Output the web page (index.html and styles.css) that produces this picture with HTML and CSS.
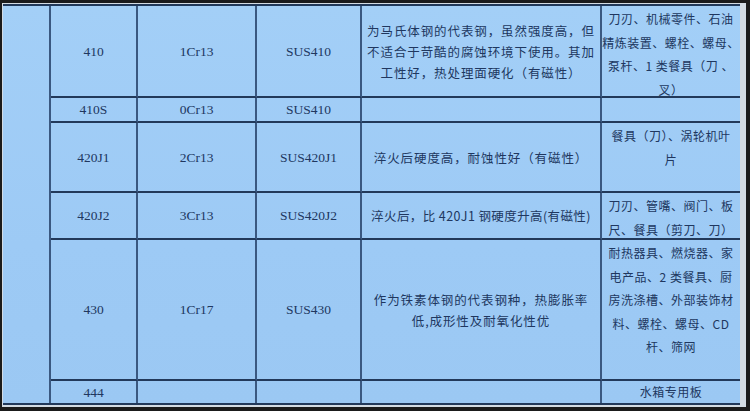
FILE: index.html
```html
<!DOCTYPE html>
<html lang="zh">
<head>
<meta charset="utf-8">
<title>不锈钢牌号对照</title>
<link rel="stylesheet" href="styles.css">
</head>
<body>
<div class="frame">
  <div class="sheet">
    <div class="c side"></div>

    <div class="c num">410</div>
    <div class="c num">1Cr13</div>
    <div class="c num">SUS410</div>
    <div class="c desc">为马氏体钢的代表钢，虽然强度高，但<br>不适合于苛酷的腐蚀环境下使用。其加<br>工性好，热处理面硬化（有磁性）</div>
    <div class="c list">刀刃、机械零件、石油<br>精炼装置、螺栓、螺母、<br>泵杆、1 类餐具（刀 、<br>叉）</div>

    <div class="c num">410S</div>
    <div class="c num">0Cr13</div>
    <div class="c num">SUS410</div>
    <div class="c desc"></div>
    <div class="c list"></div>

    <div class="c num">420J1</div>
    <div class="c num">2Cr13</div>
    <div class="c num">SUS420J1</div>
    <div class="c desc">淬火后硬度高，耐蚀性好（有磁性）</div>
    <div class="c list">餐具（刀）、涡轮机叶<br>片</div>

    <div class="c num">420J2</div>
    <div class="c num">3Cr13</div>
    <div class="c num">SUS420J2</div>
    <div class="c desc tight">淬火后，比 420J1 钢硬度升高(有磁性)</div>
    <div class="c list">刀刃、管嘴、阀门、板<br>尺、餐具（剪刀、刀）</div>

    <div class="c num">430</div>
    <div class="c num">1Cr17</div>
    <div class="c num">SUS430</div>
    <div class="c desc">作为铁素体钢的代表钢种，热膨胀率<br>低,成形性及耐氧化性优</div>
    <div class="c list">耐热器具、燃烧器、家<br>电产品、2 类餐具、厨<br>房洗涤槽、外部装饰材<br>料、螺栓、螺母、CD<br>杆、筛网</div>

    <div class="c num end">444</div>
    <div class="c num end"></div>
    <div class="c num end"></div>
    <div class="c desc end"></div>
    <div class="c list end single">水箱专用板</div>
  </div>
</div>
</body>
</html>
```

FILE: styles.css
```css
* { box-sizing: border-box; }

html, body {
  margin: 0;
  padding: 0;
  background: #1b1b1b;
}

.frame {
  width: 750px;
  height: 411px;
  border-top: 3px solid #1b1b1b;
  border-left: 2px solid #1b1b1b;
  border-right: 4px solid #1b1b1b;
  border-bottom: 4px solid #1b1b1b;
  padding: 1px 6px 2px 1px;
  background: #d3dbe3;
}

.sheet {
  width: 737px;
  height: 401px;
  display: grid;
  grid-template-columns: 48px 87px 119px 105px 240px 138px;
  grid-template-rows: 92px 25px 70px 47px 141px 22px;
  border-top: 2px solid #22395a;
  border-bottom: 2px solid #22395a;
  background: linear-gradient(180deg, #a3cff7 0%, #9dcaf5 60%, #9bc8f3 100%);
  color: #20375f;
}

.c {
  border-right: 2px solid #3a5880;
  border-bottom: 2px solid #22395a;
  display: flex;
  align-items: center;
  justify-content: center;
  text-align: center;
  white-space: nowrap;
  overflow: visible;
}

.side {
  grid-row: 1 / 7;
  grid-column: 1;
  border-bottom: none;
}

.num {
  font-family: "Liberation Serif", "Noto Sans CJK SC", serif;
  font-size: 13.5px;
  padding-top: 1px;
}

.desc {
  font-family: "Noto Sans CJK SC", sans-serif;
  font-size: 12.5px;
  letter-spacing: 0.9px;
  line-height: 21px;
}

.desc.tight {
  letter-spacing: 0.4px;
}

.list {
  border-right: none;
  align-items: flex-start;
  font-family: "Noto Sans CJK SC", sans-serif;
  font-size: 12px;
  letter-spacing: 0.5px;
  line-height: 23.5px;
  padding-top: 1px;
}

.list.single {
  align-items: center;
  padding-top: 0;
}

.end {
  border-bottom: none;
}
```
